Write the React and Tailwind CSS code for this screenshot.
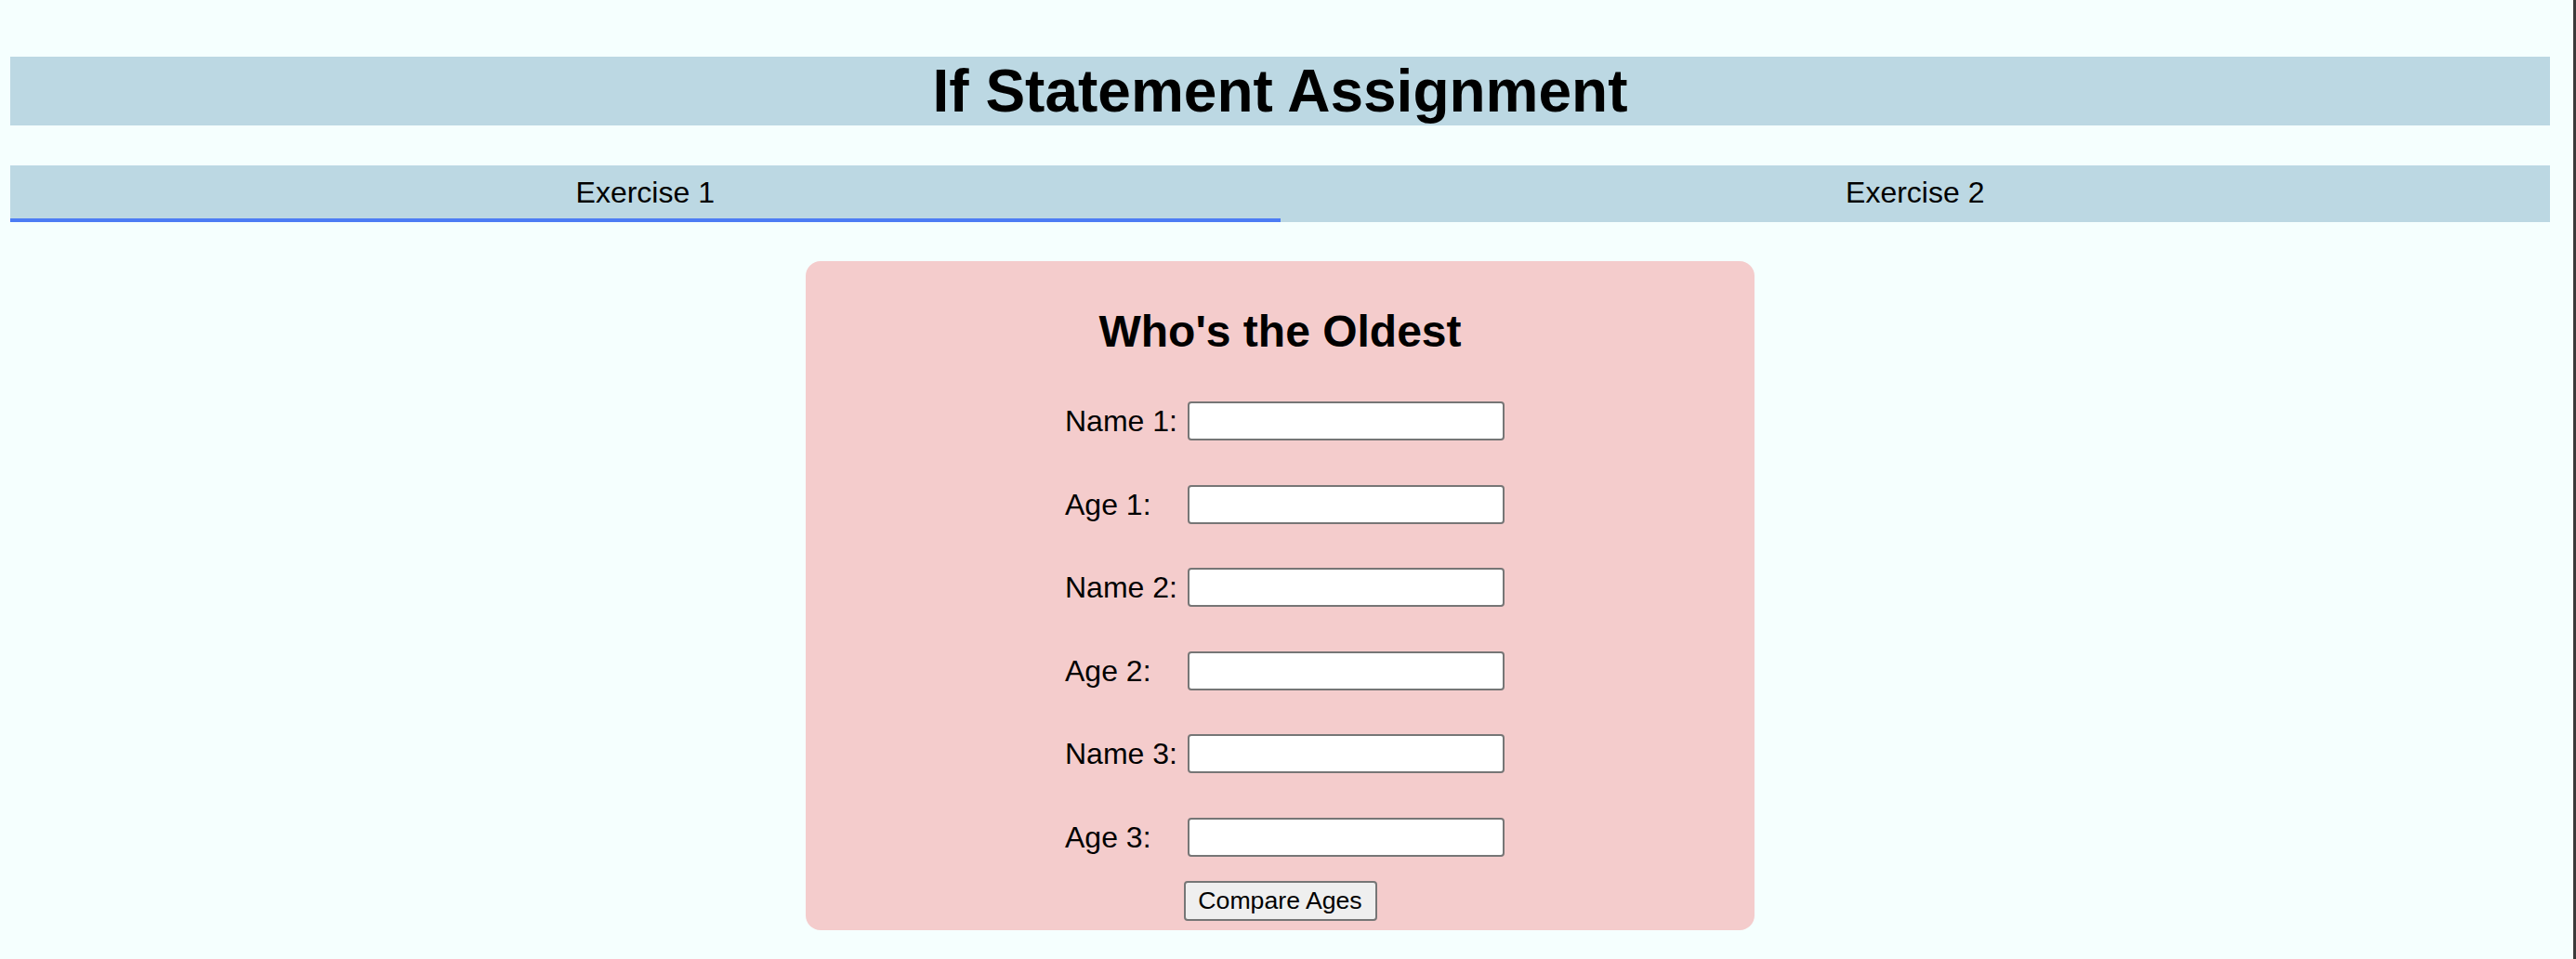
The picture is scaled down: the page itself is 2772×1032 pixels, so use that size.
import React from "react";

function Field({ label }) {
    return (
        <div className="flex flex-row items-center pl-[10px]">
            <label className="w-[132px] text-[32px] leading-[42px]">{label}</label>
            <input
                type="text"
                className="w-[341px] h-[42px] bg-white border-2 border-[#767676] rounded-[4px] px-2 text-[26px]"
            />
        </div>
    );
}

function App() {
    const fields = ["Name 1:", "Age 1:", "Name 2:", "Age 2:", "Name 3:", "Age 3:"];

    return (
        <div
            className="h-[1032px] overflow-hidden bg-[#f5fffe] pl-[11px] pr-[25px] pt-[61px] border-r-[3px] border-[#3a3a3a] text-black"
            style={{ fontFamily: '"Liberation Sans", Arial, sans-serif' }}
        >
            <div className="h-[74px] bg-[#bcd8e3] flex items-center justify-center">
                <h1 className="text-[64px] font-bold leading-none">If Statement Assignment</h1>
            </div>

            <div className="mt-[43px] h-[61px] bg-[#bcd8e3] flex flex-row">
                <button className="flex-1 flex items-center justify-center text-[32px] border-b-4 border-[#4c7cf4]">
                    Exercise 1
                </button>
                <button className="flex-1 flex items-center justify-center text-[32px] border-b-4 border-transparent">
                    Exercise 2
                </button>
            </div>

            <div className="mt-[42px] mx-auto w-[1021px] h-[720px] bg-[#f4cccc] rounded-[16px] flex flex-col items-center pt-[48px]">
                <h2 className="text-[48px] font-bold leading-[56px]">Who's the Oldest</h2>
                <div className="mt-[47px] flex flex-col gap-[47.5px]">
                    {fields.map((f) => (
                        <Field key={f} label={f} />
                    ))}
                </div>
                <button className="mt-[26.5px] w-[208px] h-[43px] bg-[#efefef] border-2 border-[#767676] rounded-[4px] text-[26.67px] leading-none">
                    Compare Ages
                </button>
            </div>
        </div>
    );
}

export default App;
